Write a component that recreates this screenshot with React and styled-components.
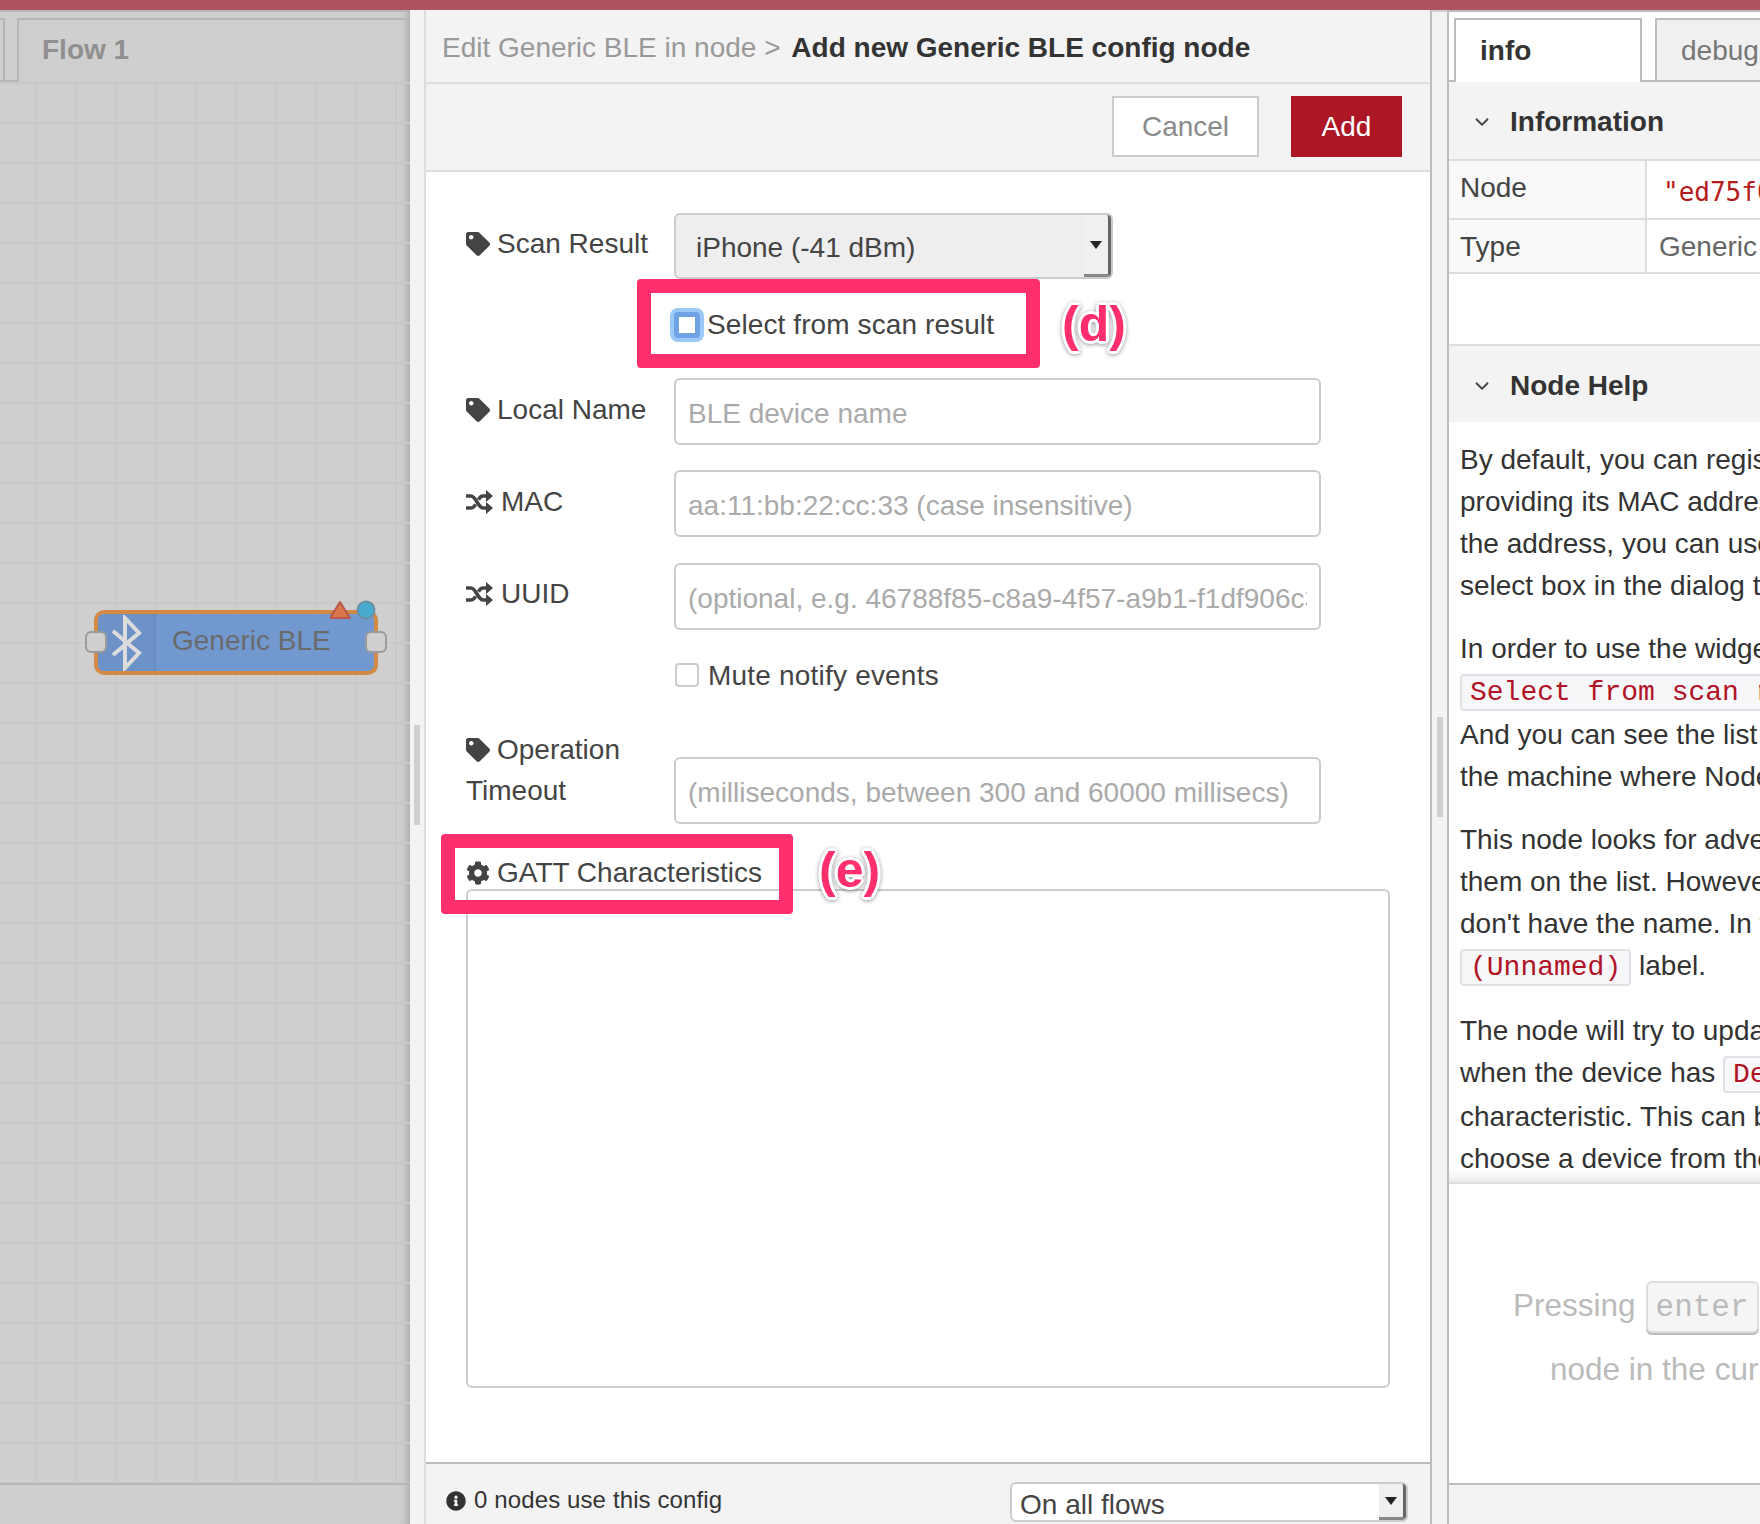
import React from "react";
import styled, { createGlobalStyle } from "styled-components";
import { FaTag, FaCog, FaInfoCircle } from "react-icons/fa";
import { ChevronDown } from "lucide-react";

const GlobalStyle = createGlobalStyle`
  * { box-sizing: border-box; }
  html, body { margin: 0; padding: 0; background: #fff; }
  body {
    font-family: "Liberation Sans", Arial, sans-serif;
    font-size: 28px;
    color: #444;
  }
`;

const Page = styled.div`
  width: 1760px;
  height: 1524px;
  overflow: hidden;
  display: flex;
  flex-direction: column;
`;

const TopBar = styled.div`
  height: 10px;
  flex: none;
  background: #ae5361;
`;

const Main = styled.div`
  flex: 1;
  display: flex;
  min-height: 0;
`;

/* workspace (dimmed behind the dialog) */
const Workspace = styled.div`
  width: 410px;
  flex: none;
  display: flex;
  flex-direction: column;
  background: #cfcfcf;
  border-top: 2px solid #b6b6b6;
  box-shadow: inset -10px 0 8px -8px rgba(0, 0, 0, 0.22);
`;

const WsTabs = styled.div`
  height: 70px;
  flex: none;
  padding-top: 6px;
  display: flex;
  border-bottom: 0;
`;

const WsStub = styled.div`
  width: 17px;
  height: 64px;
  border-bottom: 2px solid #b6b6b6;
  &::before {
    content: "";
    display: block;
    width: 3px;
    height: 62px;
    border-right: 2px solid #b6b6b6;
    border-top: 2px solid #b6b6b6;
  }
`;

const WsTab = styled.div`
  flex: 1;
  border-left: 2px solid #b6b6b6;
  border-top: 2px solid #b6b6b6;
  padding: 12px 0 0 23px;
  font-weight: 700;
  line-height: 36px;
  color: #8f8f8f;
`;

const Canvas = styled.div`
  flex: 1;
  position: relative;
  background-image:
    linear-gradient(#c9c9c9 0 2px, transparent 2px),
    linear-gradient(90deg, #c9c9c9 0 2px, transparent 2px);
  background-size: 40px 40px;
  background-position: 35px 0;
`;

const WsFooter = styled.div`
  height: 41px;
  flex: none;
  border-top: 2px solid #b6b6b6;
`;

const FlowNode = styled.div`
  position: absolute;
  left: 94px;
  top: 528px;
  width: 284px;
  height: 65px;
  background: #7199d0;
  border: 4px solid #d38a45;
  border-radius: 10px;
  display: flex;
  align-items: center;
  color: #6a6a6a;
  line-height: 1;
`;

const NodeIcon = styled.div`
  width: 58px;
  height: 100%;
  flex: none;
  background: #6c92c8;
  border-right: 2px solid #6789bd;
  display: flex;
  align-items: center;
  justify-content: center;
  border-radius: 6px 0 0 6px;
`;

const NodeLabel = styled.span`
  margin-left: 16px;
  padding-bottom: 3px;
  white-space: nowrap;
`;

const Port = styled.div`
  position: absolute;
  top: 17px;
  ${(p) => (p.$side === "left" ? "left: -13px;" : "right: -13px;")}
  width: 22px;
  height: 22px;
  background: #cfcfcf;
  border: 2px solid #9b9b9b;
  border-radius: 6px;
`;

const NodeBadges = styled.svg`
  position: absolute;
  left: 232px;
  top: -14px;
`;

/* splitters */
const Splitter = styled.div`
  width: ${(p) => p.$width}px;
  flex: none;
  background: #f3f3f3;
  display: flex;
  justify-content: center;
  align-items: center;
  ${(p) => (p.$top ? "border-top: 2px solid #cfcfcf;" : "")}
`;

const Grip = styled.div`
  width: 6px;
  height: 100px;
  background: #d0d0d0;
  margin-top: ${(p) => p.$offset}px;
`;

/* config dialog */
const Dialog = styled.div`
  width: 1008px;
  flex: none;
  display: flex;
  flex-direction: column;
  background: #fff;
  border-left: 2px solid #dcdcdc;
  border-right: 2px solid #bdbdbd;
`;

const DialogTitle = styled.div`
  height: 74px;
  flex: none;
  background: #f3f3f3;
  border-bottom: 2px solid #ddd;
  padding: 18px 0 0 16px;
  line-height: 40px;
  color: #999;
  white-space: nowrap;
  b {
    color: #333;
    margin-left: 3px;
  }
`;

const Toolbar = styled.div`
  height: 88px;
  flex: none;
  background: #f3f3f3;
  border-bottom: 2px solid #ddd;
  display: flex;
  justify-content: flex-end;
  gap: 32px;
  padding: 12px 28px 0 0;
`;

const Button = styled.div`
  height: 61px;
  width: ${(p) => p.$width}px;
  display: flex;
  align-items: center;
  justify-content: center;
  background: ${(p) => (p.$primary ? "#ad1625" : "#fff")};
  color: ${(p) => (p.$primary ? "#fff" : "#8a8a8a")};
  border: 2px solid ${(p) => (p.$primary ? "#ad1625" : "#ccc")};
`;

const Form = styled.div`
  flex: 1;
  min-height: 0;
  padding: 41px 0 0 40px;
  display: flex;
  flex-direction: column;
`;

const Row = styled.div`
  display: flex;
  align-items: flex-start;
  margin-top: ${(p) => p.$top || 0}px;
  height: ${(p) => p.$height || 67}px;
`;

const Label = styled.div`
  width: 208px;
  flex: none;
  line-height: 41px;
  padding-top: ${(p) => (p.$pad === undefined ? 10 : p.$pad)}px;
  color: #444;
  white-space: nowrap;
  svg {
    vertical-align: -3px;
    margin-right: ${(p) => p.$iconGap || 7}px;
  }
`;

const TextInput = styled.input`
  width: 647px;
  height: 67px;
  border: 2px solid #ccc;
  border-radius: 6px;
  padding: 4px 12px 0;
  font: inherit;
  background: #fff;
  outline: none;
  &::placeholder {
    color: #aaa;
    opacity: 1;
  }
`;

const SelectBox = styled.div`
  position: relative;
  width: ${(p) => p.$width}px;
  height: ${(p) => p.$height}px;
  flex: none;
  border: 2px solid #ccc;
  border-radius: 6px;
  background: ${(p) => p.$bg};
  padding-left: ${(p) => p.$pad}px;
  padding-top: ${(p) => p.$top}px;
  line-height: 40px;
  color: #444;
  white-space: nowrap;
`;

const SelectArrow = styled.div`
  position: absolute;
  right: 0;
  top: 0;
  bottom: 0;
  width: 27px;
  background: #f0f0f0;
  border-right: 3px solid #666;
  border-bottom: 3px solid #888;
  border-radius: 0 4px 4px 0;
  display: flex;
  align-items: center;
  justify-content: center;
  &::after {
    content: "";
    border: 6px solid transparent;
    border-top: 8px solid #222;
    border-bottom: 0;
  }
`;

const CheckRow = styled.div`
  display: flex;
  align-items: flex-start;
  margin-left: 171px;
  height: 89px;
`;

const Highlight = styled.div`
  position: relative;
  z-index: 1;
  width: ${(p) => p.$width}px;
  height: ${(p) => p.$height}px;
  border: 14px solid #fe2f6c;
  border-radius: 4px;
  flex: none;
  display: flex;
  align-items: center;
  padding-top: ${(p) => p.$nudge || 0}px;
  padding-bottom: ${(p) => p.$lift || 0}px;
  padding-left: ${(p) => p.$pad}px;
  letter-spacing: ${(p) => p.$spacing || 0}px;
  white-space: nowrap;
  color: #444;
`;

const Callout = styled.div`
  font-weight: 700;
  font-size: 50px;
  line-height: ${(p) => p.$line}px;
  margin-left: ${(p) => p.$gap}px;
  color: #fe2f6c;
  text-shadow:
    3px 0 0 #fff, -3px 0 0 #fff, 0 3px 0 #fff, 0 -3px 0 #fff,
    2px 2px 0 #fff, -2px 2px 0 #fff, 2px -2px 0 #fff, -2px -2px 0 #fff;
  filter: drop-shadow(0 1px 2px rgba(0, 0, 0, 0.4));
`;

const FocusedCheck = styled.span`
  width: 26px;
  height: 26px;
  flex: none;
  margin-right: 7px;
  border: 5px solid #6fa3e6;
  border-radius: 4px;
  background: #fff;
  box-shadow: 0 0 0 4px #9cc8f8;
`;

const PlainCheck = styled.input`
  appearance: none;
  width: 24px;
  height: 24px;
  margin: 0 9px 2px 1px;
  flex: none;
  border: 2px solid #ccc;
  border-radius: 4px;
  background: #fff;
`;

const MuteRow = styled.div`
  display: flex;
  align-items: center;
  margin: 21px 0 0 208px;
  height: 50px;
  color: #444;
  letter-spacing: 0.2px;
`;

const OpRow = styled.div`
  display: flex;
  align-items: flex-end;
  height: 96px;
  margin-top: 27px;
`;

const GattRow = styled.div`
  display: flex;
  align-items: flex-start;
  margin: 10px 0 0 -25px;
  height: 80px;
`;

const ListBox = styled.div`
  width: 924px;
  height: 499px;
  flex: none;
  margin-top: -25px;
  border: 2px solid #ccc;
  border-radius: 6px;
  background: #fff;
`;

const DialogFooter = styled.div`
  height: 62px;
  flex: none;
  background: #f3f3f3;
  border-top: 2px solid #bdbdbd;
  display: flex;
  align-items: flex-start;
  justify-content: space-between;
  padding: 18px 22px 0 20px;
`;

const Usage = styled.div`
  font-size: 24px;
  line-height: 36px;
  color: #333;
  letter-spacing: 0.12px;
  svg {
    vertical-align: -3px;
    margin-right: 8px;
  }
`;

/* sidebar */
const Sidebar = styled.div`
  flex: 1;
  min-width: 0;
  display: flex;
  flex-direction: column;
  background: #fff;
  border-left: 2px solid #bdbdbd;
  border-top: 2px solid #bdbdbd;
  overflow: hidden;
`;

const SideTabs = styled.div`
  height: 70px;
  flex: none;
  padding: 6px 0 0 5px;
  display: flex;
  gap: 13px;
  border-bottom: 2px solid #bdbdbd;
`;

const SideTab = styled.div`
  width: 188px;
  height: ${(p) => (p.$active ? "64px" : "62px")};
  flex: none;
  position: relative;
  border: 2px solid #bdbdbd;
  border-bottom: 0;
  background: ${(p) => (p.$active ? "#fff" : "#f0f0f0")};
  color: ${(p) => (p.$active ? "#333" : "#777")};
  font-weight: ${(p) => (p.$active ? 700 : 400)};
  line-height: 36px;
  padding: 13px 0 0 24px;
  white-space: nowrap;
`;

const SectionHead = styled.div`
  height: ${(p) => p.$height}px;
  flex: none;
  background: #f3f3f3;
  border-top: ${(p) => (p.$lined ? "2px solid #ddd" : "0")};
  display: flex;
  align-items: center;
  padding: ${(p) => (p.$lined ? "3px" : "2px")} 0 0 22px;
  font-weight: 700;
  color: #333;
  svg {
    margin-right: 17px;
  }
`;

const Table = styled.div`
  flex: none;
  border-top: 2px solid #ddd;
`;

const TableRow = styled.div`
  display: flex;
  height: ${(p) => p.$height}px;
  border-bottom: 2px solid #ddd;
`;

const KeyCell = styled.div`
  width: 198px;
  flex: none;
  background: #f9f9f9;
  border-right: 2px solid #ddd;
  padding: 6px 0 0 11px;
  line-height: 42px;
  color: #444;
`;

const ValueCell = styled.div`
  flex: 1;
  padding: ${(p) => (p.$mono ? "10px 0 0 16px" : "6px 0 0 12px")};
  line-height: 42px;
  white-space: nowrap;
  overflow: hidden;
  color: ${(p) => (p.$mono ? "#b71c1c" : "#666")};
  font-family: ${(p) => (p.$mono ? '"DejaVu Sans Mono", monospace' : "inherit")};
  font-size: ${(p) => (p.$mono ? "26px" : "28px")};
`;

const Spacer = styled.div`
  height: ${(p) => p.$height}px;
  flex: none;
`;

const Help = styled.div`
  height: 762px;
  flex: none;
  overflow: hidden;
  padding: 17px 0 0 11px;
  color: #333;
  border-bottom: 2px solid #ddd;
  position: relative;
  &::after {
    content: "";
    position: absolute;
    left: 0;
    right: 0;
    bottom: 0;
    height: 12px;
    background: linear-gradient(rgba(0, 0, 0, 0), rgba(0, 0, 0, 0.08));
  }
`;

const HelpPara = styled.p`
  margin: 0 0 21px;
  line-height: 42px;
  white-space: nowrap;
`;

const Code = styled.code`
  font-family: "Liberation Mono", monospace;
  font-size: 28px;
  color: #b11226;
  background: #f7f7f9;
  border: 2px solid #e1e1e8;
  border-radius: 4px;
  padding: 1px 8px;
`;

const Hint = styled.div`
  flex: 1;
  min-height: 0;
  white-space: nowrap;
  color: #bbb;
  font-size: 31.5px;
  line-height: 64px;
  padding-top: 89px;
`;

const HintLine = styled.div`
  padding-left: ${(p) => p.$left}px;
`;

const Kbd = styled.span`
  display: inline-block;
  font-family: "Liberation Mono", monospace;
  font-size: 31px;
  line-height: 46px;
  height: 52px;
  padding: 2px 8px 0;
  margin: 8px 0 0 10px;
  color: #bbb;
  background: #f5f5f5;
  border: 2px solid #ddd;
  border-radius: 6px;
  box-shadow: 0 2px 0 #bbb;
  vertical-align: top;
`;

const SideFooter = styled.div`
  height: 41px;
  flex: none;
  background: #f3f3f3;
  border-top: 2px solid #bdbdbd;
`;

function BluetoothGlyph() {
  return (
    <svg width="32" height="56" viewBox="0 0 32 56">
      <polyline
        points="3,16 29,38 15,53 15,3 29,18 3,40"
        fill="none"
        stroke="#dcdcdc"
        strokeWidth="4"
      />
    </svg>
  );
}

function ShuffleGlyph() {
  return (
    <svg width="27" height="24" viewBox="0 0 27 24">
      <path d="M0 6h5c5 0 7 12 12 12h4M0 18h5c2 0 3.400-1.600 4.600-3.600M12.400 9.600C13.600 7.600 15 6 17 6h4" fill="none" stroke="#444" strokeWidth="3.500" />
      <path d="M20 0l7 6-7 6zM20 12l7 6-7 6z" fill="#444" />
    </svg>
  );
}

export default function App() {
  return (
    <Page>
      <GlobalStyle />
      <TopBar />
      <Main>
        <Workspace>
          <WsTabs>
            <WsStub />
            <WsTab>Flow 1</WsTab>
          </WsTabs>
          <Canvas>
            <FlowNode>
              <NodeIcon>
                <BluetoothGlyph />
              </NodeIcon>
              <NodeLabel>Generic BLE</NodeLabel>
              <Port $side="left" />
              <Port $side="right" />
              <NodeBadges width="48" height="24" viewBox="0 0 48 24">
                <polygon points="0,18 10,2 20,18" fill="#d9774a" stroke="#b8584f" strokeWidth="2" strokeLinejoin="round" />
                <circle cx="36" cy="10" r="8.5" fill="#47acd0" stroke="#6a8fa3" strokeWidth="2" />
              </NodeBadges>
            </FlowNode>
          </Canvas>
          <WsFooter />
        </Workspace>

        <Splitter $width={14}>
          <Grip $offset={16} />
        </Splitter>

        <Dialog>
          <DialogTitle>
            Edit Generic BLE in node &gt; <b>Add new Generic BLE config node</b>
          </DialogTitle>
          <Toolbar>
            <Button $width={147}>Cancel</Button>
            <Button $width={111} $primary>Add</Button>
          </Toolbar>
          <Form>
            <Row $height={66}>
              <Label>
                <FaTag size={24} />
                Scan Result
              </Label>
              <SelectBox $width={439} $height={66} $bg="#eeeeee" $pad={20} $top={13}>
                iPhone (-41 dBm)
                <SelectArrow />
              </SelectBox>
            </Row>
            <CheckRow>
              <Highlight $width={403} $height={89} $pad={23} $nudge={2} $spacing={0.1}>
                <FocusedCheck />
                Select from scan result
              </Highlight>
              <Callout $gap={22} $line={90}>(d)</Callout>
            </CheckRow>
            <Row $top={10}>
              <Label $pad={11}>
                <FaTag size={24} />
                Local Name
              </Label>
              <TextInput readOnly placeholder="BLE device name" />
            </Row>
            <Row $top={25}>
              <Label $pad={11} $iconGap={8}>
                <ShuffleGlyph />
                MAC
              </Label>
              <TextInput readOnly placeholder="aa:11:bb:22:cc:33 (case insensitive)" />
            </Row>
            <Row $top={26}>
              <Label $pad={10} $iconGap={8}>
                <ShuffleGlyph />
                UUID
              </Label>
              <TextInput readOnly placeholder="(optional, e.g. 46788f85-c8a9-4f57-a9b1-f1df906c3f3b)" />
            </Row>
            <MuteRow>
              <PlainCheck type="checkbox" readOnly />
              Mute notify events
            </MuteRow>
            <OpRow>
              <Label $pad={0}>
                <FaTag size={24} />
                Operation
                <br />
                Timeout
                <Spacer $height={13} />
              </Label>
              <TextInput readOnly placeholder="(milliseconds, between 300 and 60000 millisecs)" />
            </OpRow>
            <GattRow>
              <Highlight $width={352} $height={80} $pad={11} $lift={3}>
                <FaCog size={24} style={{ marginRight: 7 }} />
                GATT Characteristics
              </Highlight>
              <Callout $gap={26} $line={72}>(e)</Callout>
            </GattRow>
            <ListBox />
          </Form>
          <DialogFooter>
            <Usage>
              <FaInfoCircle size={20} />
              0 nodes use this config
            </Usage>
            <SelectBox $width={398} $height={40} $bg="#fff" $pad={8} $top={1}>
              On all flows
              <SelectArrow />
            </SelectBox>
          </DialogFooter>
        </Dialog>

        <Splitter $width={15} $top>
          <Grip $offset={-2} />
        </Splitter>

        <Sidebar>
          <SideTabs>
            <SideTab $active>info</SideTab>
            <SideTab>debug</SideTab>
          </SideTabs>
          <SectionHead $height={77}>
            <ChevronDown size={22} strokeWidth={2} color="#444" />
            Information
          </SectionHead>
          <Table>
            <TableRow $height={59}>
              <KeyCell>Node</KeyCell>
              <ValueCell $mono>"ed75f0a1.9c8e</ValueCell>
            </TableRow>
            <TableRow $height={54}>
              <KeyCell>Type</KeyCell>
              <ValueCell>Generic BLE</ValueCell>
            </TableRow>
          </Table>
          <Spacer $height={70} />
          <SectionHead $height={78} $lined>
            <ChevronDown size={22} strokeWidth={2} color="#444" />
            Node Help
          </SectionHead>
          <Help>
            <HelpPara>
              By default, you can register
              <br />
              providing its MAC address
              <br />
              the address, you can use
              <br />
              select box in the dialog to
            </HelpPara>
            <HelpPara>
              In order to use the widget
              <br />
              <Code>Select from scan result</Code>
              <br />
              And you can see the list of
              <br />
              the machine where Node-RED
            </HelpPara>
            <HelpPara>
              This node looks for advertising
              <br />
              them on the list. However,
              <br />
              don't have the name. In this
              <br />
              <Code>(Unnamed)</Code> label.
            </HelpPara>
            <HelpPara>
              The node will try to update
              <br />
              when the device has <Code>Device</Code>
              <br />
              characteristic. This can be
              <br />
              choose a device from the
            </HelpPara>
          </Help>
          <Hint>
            <HintLine $left={64}>
              Pressing<Kbd>enter</Kbd>
            </HintLine>
            <HintLine $left={101}>node in the current</HintLine>
          </Hint>
          <SideFooter />
        </Sidebar>
      </Main>
    </Page>
  );
}
